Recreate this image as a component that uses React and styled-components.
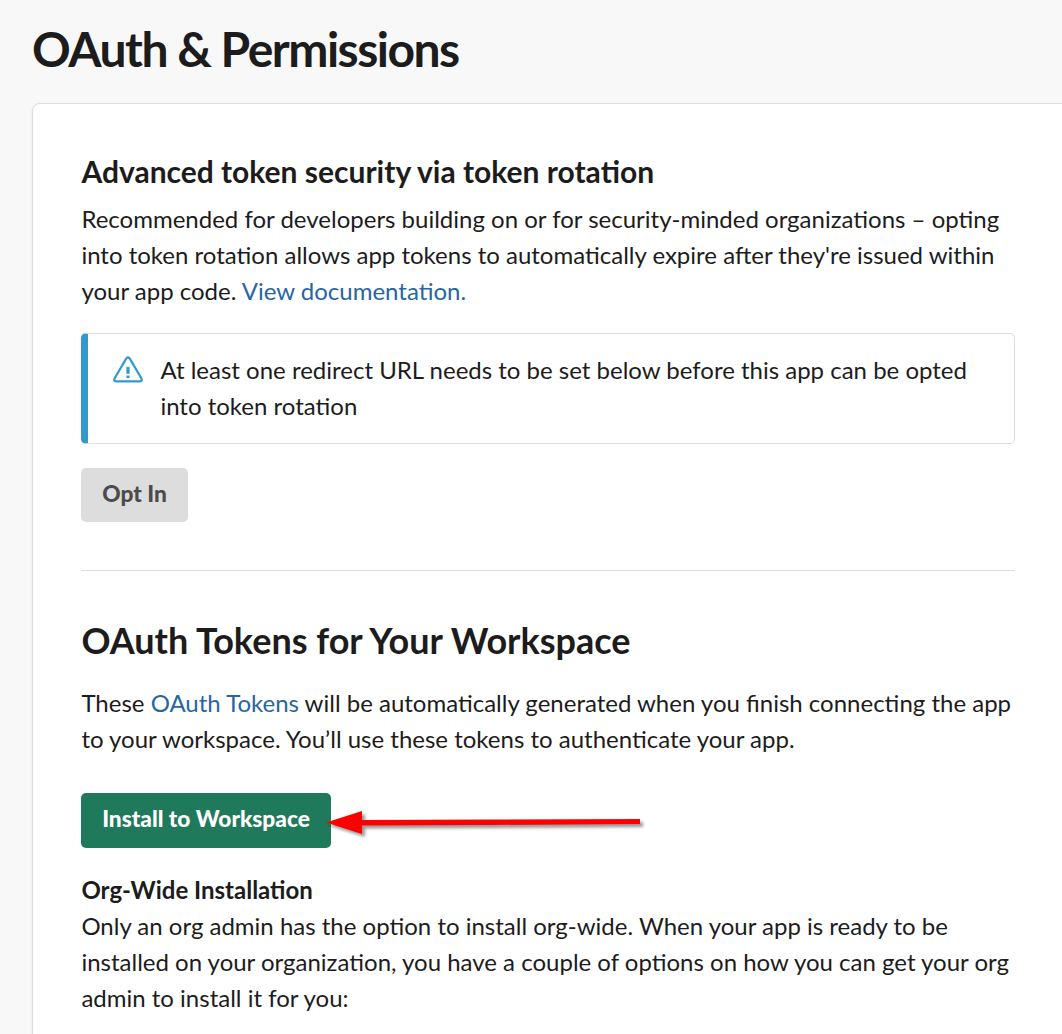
import React from "react";
import styled, { createGlobalStyle } from "styled-components";

const Global = createGlobalStyle`
  * { box-sizing: border-box; }
  html, body { margin: 0; background: #f8f8f8; overflow: hidden; }
  body { font-family: Lato, "Liberation Sans", sans-serif; color: #1d1c1d; font-size: 24px; line-height: 36px; }
`;
const Page = styled.main`
  width: 1062px; height: 1034px; overflow: hidden;
  padding: 19px 0 0 32px;
`;
const Title = styled.h1`
  margin: 0 0 24px; font-size: 48px; line-height: 60px; font-weight: 700; letter-spacing: -1.5px; white-space: nowrap;
`;
const Card = styled.section`
  width: 1040px; height: 960px; padding: 47px 48px;
  background: #fff; border: 1px solid #dddddd; border-radius: 8px;
  box-shadow: 0 1px 3px rgba(0, 0, 0, 0.08);
`;
const Column = styled.div`width: 934px;`;
const Heading = styled.h3`
  margin: ${(p) => p.$top || 0}px 0 0; padding-left: 0.4px;
  font-size: ${(p) => p.$size}px; line-height: ${(p) => p.$line}px; font-weight: 700; white-space: nowrap;
`;
const Text = styled.p`margin: ${(p) => p.$margin || "0"}; padding-left: 0.4px; white-space: nowrap;`;
const Line = styled.span`display: block; width: max-content;`;
const Link = styled.a`color: #2765a3; text-decoration: none;`;
const Notice = styled.div`
  display: flex; height: 111px; padding: 18px 24px; gap: 16px;
  border: 1px solid #dddddd; border-left: 7px solid #3399cc; border-radius: 5px;
`;
const NoticeIcon = styled.svg`flex: none; margin-top: 2px;`;
const Button = styled.button`
  display: block; height: ${(p) => p.$h}px; width: ${(p) => p.$w}px; padding: 0 0 3px;
  border: 0; border-radius: 5px; font: 900 22.7px/30px Lato, sans-serif; white-space: nowrap;
  color: ${(p) => (p.$primary ? "#fff" : "#4c4b4c")};
  background: ${(p) => (p.$primary ? "#1f7a5c" : "#dddddd")};
`;
const Actions = styled.div`margin-top: 24px;`;
const Rule = styled.hr`margin: 48px 0 47px; border: 0; border-top: 1px solid #dddddd;`;
const InstallRow = styled.div`position: relative; margin-top: 36px;`;
const Arrow = styled.svg`
  position: absolute; left: 240px; top: 9px;
  filter: drop-shadow(3px 3px 1.5px rgba(0, 0, 0, 0.4));
`;

export default function App() {
  return (
    <>
      <Global />
      <Page>
        <Title>OAuth &amp; Permissions</Title>
        <Card>
          <Column>
            <Heading $size={30} $line={40}>Advanced token security via token rotation</Heading>
            <Text $margin="10px 0 24px">
              <Line>Recommended for developers building on or for security-minded organizations – opting</Line>
              <Line>into token rotation allows app tokens to automatically expire after they're issued within</Line>
              <Line>your app code. <Link>View documentation.</Link></Line>
            </Text>
            <Notice>
              <NoticeIcon width="32" height="32" viewBox="0 0 32 32" fill="none" stroke="#3399cc" strokeWidth="2.2">
                <path d="M14.2 4.6 2.7 24.2c-1.1 2 -.5 3.2 1.5 3.2h23.6c2 0 2.6-1.2 1.5-3.2L17.8 4.6c-1-1.6-2.6-1.6-3.6 0Z" strokeLinejoin="round" />
                <path d="M16 13v6.8" strokeWidth="3.2" />
                <path d="M16 21.6v2.4" strokeWidth="3.2" />
              </NoticeIcon>
              <Text>
                <Line>At least one redirect URL needs to be set below before this app can be opted</Line>
                <Line>into token rotation</Line>
              </Text>
            </Notice>
            <Actions><Button $w={107} $h={54}>Opt In</Button></Actions>
            <Rule />
            <Heading $size={36} $line={45}>OAuth Tokens for Your Workspace</Heading>
            <Text $margin="22px 0 0">
              <Line>These <Link>OAuth Tokens</Link> will be automatically generated when you finish connecting the app</Line>
              <Line>to your workspace. You’ll use these tokens to authenticate your app.</Line>
            </Text>
            <InstallRow>
              <Button $primary $w={250} $h={55}>Install to Workspace</Button>
              <Arrow width="330" height="45" viewBox="0 0 330 45">
                <path d="M5 20.5 41 9v9l127-.5 151-.5v5l-151 1-127 .5v8.5Z" fill="#ff0000" />
              </Arrow>
            </InstallRow>
            <Heading $size={24} $line={36} $top={24}>Org-Wide Installation</Heading>
            <Text>
              <Line>Only an org admin has the option to install org-wide. When your app is ready to be</Line>
              <Line>installed on your organization, you have a couple of options on how you can get your org</Line>
              <Line>admin to install it for you:</Line>
            </Text>
          </Column>
        </Card>
      </Page>
    </>
  );
}
